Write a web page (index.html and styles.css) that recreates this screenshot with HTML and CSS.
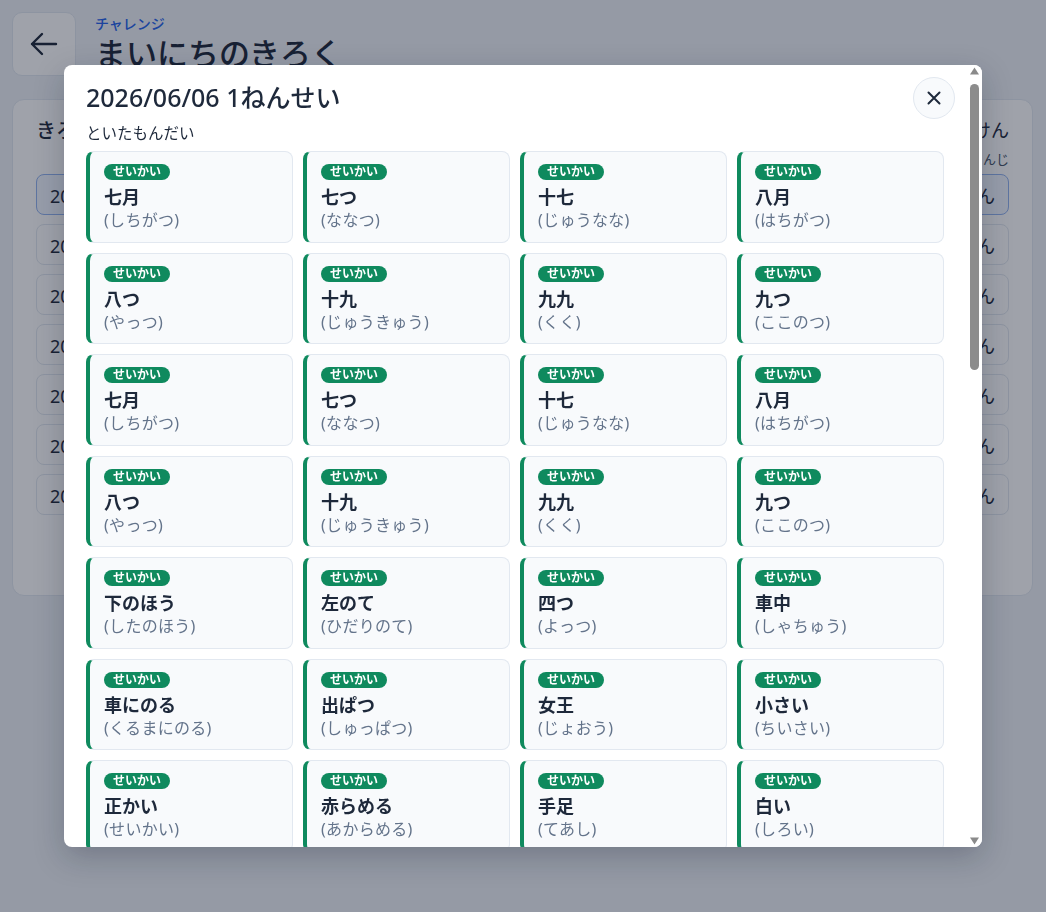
FILE: index.html
```html
<!DOCTYPE html>
<html lang="ja">
<head>
    <meta charset="UTF-8">
    <meta name="viewport" content="width=device-width, initial-scale=1.0">
    <title>まいにちのきろく</title>
    <link rel="stylesheet" href="styles.css">
</head>

<body>
    <div class="page">
        <header class="top">
            <button class="back" aria-label="もどる">
                <svg width="32" height="32" viewBox="0 0 32 32" fill="none" stroke="#1e293b" stroke-width="2.4" stroke-linecap="round" stroke-linejoin="round">
                    <path d="M28 16H4M14 6L4 16l10 10"/>
                </svg>
            </button>
            <div class="titles">
                <p class="eyebrow">チャレンジ</p>
                <h1>まいにちのきろく</h1>
            </div>
        </header>

        <section class="panel">
            <div class="panel-head">
                <h2>きろく</h2>
                <div class="count">
                    <span>ぜんぶで 7けん</span>
                    <small>あたらしいじゅんじ</small>
                </div>
            </div>
            <ul class="log">
                <li class="log-row active"><span>2026/06/06 1ねんせい</span><span>28もん</span></li>
                <li class="log-row"><span>2026/06/05 1ねんせい</span><span>20もん</span></li>
                <li class="log-row"><span>2026/06/04 1ねんせい</span><span>20もん</span></li>
                <li class="log-row"><span>2026/06/03 1ねんせい</span><span>16もん</span></li>
                <li class="log-row"><span>2026/06/02 1ねんせい</span><span>12もん</span></li>
                <li class="log-row"><span>2026/06/01 1ねんせい</span><span>12もん</span></li>
                <li class="log-row"><span>2026/05/31 1ねんせい</span><span>8もん</span></li>
            </ul>
        </section>
    </div>

    <div class="overlay">
        <div class="modal">
            <div class="modal-body">
                <button class="close" aria-label="とじる">
                    <svg width="18" height="18" viewBox="0 0 18 18" fill="none" stroke="#1e293b" stroke-width="2" stroke-linecap="round">
                        <path d="M3.5 3.5l11 11M14.5 3.5l-11 11"/>
                    </svg>
                </button>
                <h3 class="modal-title">2026/06/06 1ねんせい</h3>
                <p class="modal-sub">といたもんだい</p>
                <div class="answers" id="answers">
                    <!-- cards are filled in below -->
                </div>
            </div>
            <!-- scroll bar of the dialog body -->
            <div class="scrollbar">
                <svg class="arrow" width="15" height="14" viewBox="0 0 15 14"><path d="M7.5 2.5L12 9.5H3z" fill="#8a8a8a"/></svg>
                <div class="track"><div class="thumb"></div></div>
                <svg class="arrow" width="15" height="14" viewBox="0 0 15 14"><path d="M3 4.5H12L7.5 11.5z" fill="#8a8a8a"/></svg>
            </div>
        </div>
    </div>

    <script>
        // words the child answered today
        var setA = [
            ["七月", "しちがつ"], ["七つ", "ななつ"], ["十七", "じゅうなな"], ["八月", "はちがつ"],
            ["八つ", "やっつ"], ["十九", "じゅうきゅう"], ["九九", "くく"], ["九つ", "ここのつ"]
        ];
        var setB = [
            ["下のほう", "したのほう"], ["左のて", "ひだりのて"], ["四つ", "よっつ"], ["車中", "しゃちゅう"],
            ["車にのる", "くるまにのる"], ["出ぱつ", "しゅっぱつ"], ["女王", "じょおう"], ["小さい", "ちいさい"],
            ["正かい", "せいかい"], ["赤らめる", "あからめる"], ["手足", "てあし"], ["白い", "しろい"]
        ];
        var words = [].concat(setA, setA, setB, setA, setA, setB, setA, setB);

        var box = document.getElementById("answers");
        var html = "";
        words.forEach(function (w) {
            html += '<div class="card">' +
                '<span class="badge">せいかい</span>' +
                '<div class="word">' + w[0] + '</div>' +
                '<div class="reading">(' + w[1] + ')</div>' +
                '</div>';
        });
        box.innerHTML = html;
    </script>
</body>
</html>
```

FILE: styles.css
```css
* {
    box-sizing: border-box;
}

body {
    margin: 0;
    font-family: "Noto Sans", "Noto Sans CJK JP", sans-serif;
    background-color: #eef2f7;
    color: #1e293b;
    height: 912px;
    overflow: hidden;
}

/* page behind the dialog */
.page {
    padding: 12px 13px 12px 12px;
}

.top {
    display: flex;
    align-items: center;
    gap: 19px;
}

.back {
    width: 64px;
    height: 64px;
    border: 1px solid #e2e8f0;
    border-radius: 10px;
    background: #fff;
    display: flex;
    align-items: center;
    justify-content: center;
    padding: 0;
}

.eyebrow {
    margin: 0;
    font-size: 14px;
    line-height: 18px;
    font-weight: 500;
    color: #2563eb;
}

h1 {
    margin: 0;
    font-size: 31px;
    line-height: 40px;
    font-weight: 500;
}

.panel {
    margin-top: 23px;
    background: #fff;
    border: 1px solid #e2e8f0;
    border-radius: 12px;
    padding: 17px 23px 80px 23px;
}

.panel-head {
    display: flex;
    justify-content: space-between;
    align-items: flex-start;
    margin-bottom: 6px;
}

h2 {
    margin: 0;
    font-size: 20px;
    line-height: 28px;
    font-weight: 500;
}

.count {
    display: flex;
    flex-direction: column;
    align-items: flex-end;
    gap: 7px;
}

.count span {
    font-size: 18px;
    line-height: 26px;
}

.count small {
    font-size: 13px;
    line-height: 18px;
    color: #475569;
}

.log {
    list-style: none;
    margin: 0;
    padding: 0;
    display: flex;
    flex-direction: column;
    gap: 9px;
}

.log-row {
    height: 41px;
    border: 1px solid #e2e8f0;
    border-radius: 8px;
    display: flex;
    justify-content: space-between;
    align-items: center;
    padding: 0 13px;
    font-size: 18px;
}

.log-row.active {
    border-color: #93b4f0;
    background: #f1f6ff;
}

/* dialog */
.overlay {
    position: fixed;
    inset: 0;
    background: rgba(15, 23, 42, 0.4);
    display: flex;
    align-items: center;
    justify-content: center;
}

.modal {
    width: 918px;
    height: 782px;
    display: flex;
    overflow: hidden;
    background: #fff;
    border-radius: 8px;
    box-shadow: 0 10px 30px rgba(15, 23, 42, 0.25);
}

.modal-body {
    position: relative;
    flex: 1;
    min-width: 0;
    overflow: hidden;
    padding: 16px 23px 22px 22px;
}

.scrollbar {
    width: 15px;
    flex: none;
    display: flex;
    flex-direction: column;
    background: #fff;
}

.arrow {
    display: block;
    flex: none;
}

.track {
    flex: 1;
    padding: 5px 3px 0;
}

.thumb {
    height: 286px;
    background: #8c8c8c;
    border-radius: 5px;
}

.close {
    position: absolute;
    top: 12px;
    right: 12px;
    width: 42px;
    height: 42px;
    border-radius: 50%;
    border: 1px solid #e2e8f0;
    background: #f8fafc;
    display: flex;
    align-items: center;
    justify-content: center;
    padding: 0;
}

.modal-title {
    margin: 0;
    font-size: 25px;
    line-height: 32px;
    font-weight: 500;
}

.modal-sub {
    margin: 10px 0 0;
    font-size: 15.5px;
    line-height: 20px;
}

.answers {
    margin-top: 8px;
    display: grid;
    grid-template-columns: repeat(4, 1fr);
    gap: 10px;
}

.card {
    background: #f8fafc;
    border: 1px solid #e2e8f0;
    border-left: 4px solid #0f8a5e;
    border-radius: 8px;
    padding: 12px 14px 10px;
    height: 91.5px;
}

.badge {
    display: block;
    width: fit-content;
    background: #0f8a5e;
    color: #fff;
    font-size: 12px;
    line-height: 16px;
    font-weight: 700;
    padding: 0 9px;
    border-radius: 999px;
}

.word {
    margin-top: 5px;
    font-size: 18px;
    line-height: 24px;
    font-weight: 700;
    color: #1e293b;
}

.reading {
    font-size: 16px;
    line-height: 22px;
    color: #64748b;
    letter-spacing: 0.3px;
}
```
